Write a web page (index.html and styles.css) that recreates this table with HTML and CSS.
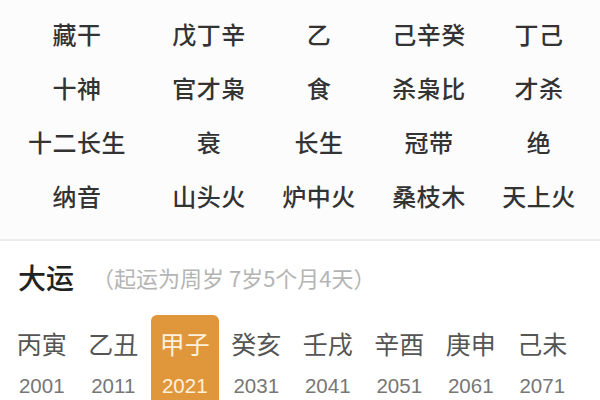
FILE: index.html
```html
<!DOCTYPE html>
<html lang="zh-CN">
<head>
<meta charset="utf-8">
<link rel="stylesheet" href="styles.css">
</head>
<body>
<section class="pillars">
  <div class="grid">
    <div class="cell">藏干</div><div class="cell">戊丁辛</div><div class="cell">乙</div><div class="cell">己辛癸</div><div class="cell">丁己</div>
    <div class="cell">十神</div><div class="cell">官才枭</div><div class="cell">食</div><div class="cell">杀枭比</div><div class="cell">才杀</div>
    <div class="cell">十二长生</div><div class="cell">衰</div><div class="cell">长生</div><div class="cell">冠带</div><div class="cell">绝</div>
    <div class="cell">纳音</div><div class="cell">山头火</div><div class="cell">炉中火</div><div class="cell">桑枝木</div><div class="cell">天上火</div>
  </div>
</section>
<section class="dayun">
  <div class="head">
    <span class="title">大运</span>
    <span class="note">（起运为周岁 7岁5个月4天）</span>
  </div>
  <div class="list">
    <div class="item"><span class="gz">丙寅</span><span class="yr">2001</span></div>
    <div class="item"><span class="gz">乙丑</span><span class="yr">2011</span></div>
    <div class="item active"><span class="gz">甲子</span><span class="yr">2021</span></div>
    <div class="item"><span class="gz">癸亥</span><span class="yr">2031</span></div>
    <div class="item"><span class="gz">壬戌</span><span class="yr">2041</span></div>
    <div class="item"><span class="gz">辛酉</span><span class="yr">2051</span></div>
    <div class="item"><span class="gz">庚申</span><span class="yr">2061</span></div>
    <div class="item"><span class="gz">己未</span><span class="yr">2071</span></div>
  </div>
</section>
</body>
</html>
```

FILE: styles.css
```css
html, body {
  margin: 0;
  padding: 0;
  background: #fff;
  font-family: "Noto Sans CJK SC", "Noto Sans", sans-serif;
  overflow: hidden;
  height: 400px;
}
.pillars {
  background: #fdfcfd;
  padding: 6px 0 17px;
  border-bottom: 2px solid #ededf0;
}
.grid {
  display: grid;
  grid-template-columns: 154px repeat(4, 110px);
  grid-auto-rows: 54px;
}
.cell {
  display: flex;
  align-items: center;
  justify-content: center;
  font-size: 24px;
  font-weight: 500;
  color: #333;
  letter-spacing: 0.5px;
}
.dayun {
  padding: 0 0 0 6px;
}
.head {
  height: 72px;
  display: flex;
  align-items: center;
  padding-left: 12px;
}
.title {
  font-size: 28px;
  font-weight: 500;
  color: #222;
  margin-right: 18px;
}
.note {
  font-size: 22px;
  color: #b4b4b4;
}
.list {
  display: flex;
  margin-top: 2px;
}
.item {
  width: 71.5px;
  display: flex;
  flex-direction: column;
  align-items: center;
  padding-top: 12px;
  height: 100px;
  box-sizing: border-box;
}
.gz {
  font-size: 25px;
  color: #555;
  line-height: 32px;
}
.yr {
  font-size: 20.5px;
  color: #777;
  margin-top: 15px;
  font-family: "Liberation Sans", "Noto Sans", sans-serif;
}
.item.active {
  background: #e0973c;
  border-radius: 6px;
  margin: 0 2px;
  width: 67.5px;
}
.item.active .gz,
.item.active .yr {
  color: #fdf1dc;
}
```
